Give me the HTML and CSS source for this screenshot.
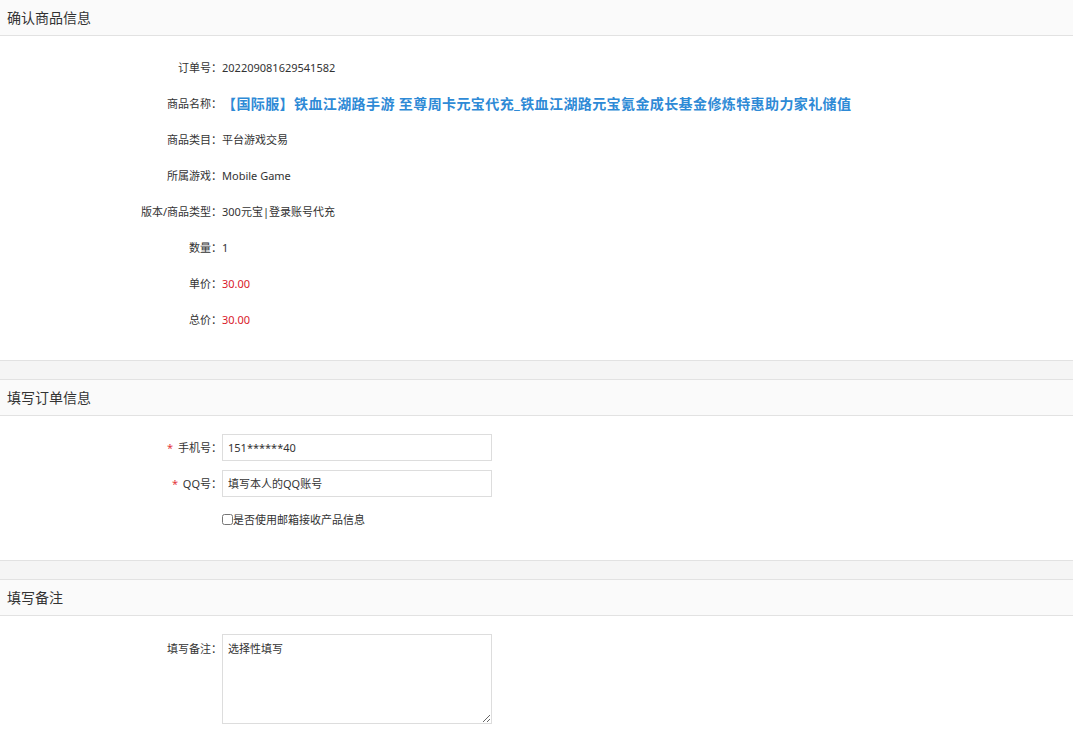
FILE: index.html
```html
<!DOCTYPE html>
<html lang="zh-CN">
<head>
<meta charset="utf-8">
<title>确认订单</title>
<link rel="stylesheet" href="styles.css">
</head>
<body>
<div class="panel">
  <div class="panel-title">确认商品信息</div>
  <div class="panel-body">
    <div class="row"><div class="label">订单号：</div><div class="value">202209081629541582</div></div>
    <div class="row"><div class="label">商品名称：</div><div class="value name">【国际服】铁血江湖路手游 至尊周卡元宝代充_铁血江湖路元宝氪金成长基金修炼特惠助力家礼储值</div></div>
    <div class="row"><div class="label">商品类目：</div><div class="value">平台游戏交易</div></div>
    <div class="row"><div class="label">所属游戏：</div><div class="value">Mobile Game</div></div>
    <div class="row"><div class="label">版本/商品类型：</div><div class="value">300元宝|登录账号代充</div></div>
    <div class="row"><div class="label">数量：</div><div class="value">1</div></div>
    <div class="row"><div class="label">单价：</div><div class="value price">30.00</div></div>
    <div class="row"><div class="label">总价：</div><div class="value price">30.00</div></div>
  </div>
</div>
<div class="band"></div>
<div class="panel">
  <div class="panel-title">填写订单信息</div>
  <div class="panel-body">
    <div class="row"><div class="label"><span class="req">*</span> 手机号：</div><div class="value"><input class="field" type="text" value="151******40"></div></div>
    <div class="row"><div class="label"><span class="req">*</span> QQ号：</div><div class="value"><input class="field" type="text" value="填写本人的QQ账号"></div></div>
    <div class="row"><div class="label"></div><div class="value"><label class="check"><input type="checkbox" class="box">是否使用邮箱接收产品信息</label></div></div>
  </div>
</div>
<div class="band"></div>
<div class="panel">
  <div class="panel-title">填写备注</div>
  <div class="panel-body memo">
    <div class="row top"><div class="label">填写备注：</div><div class="value"><textarea class="area">选择性填写</textarea></div></div>
  </div>
</div>
</body>
</html>
```
FILE: styles.css
```css
html, body {
  margin: 0;
  padding: 0;
  background: #fff;
  font-family: "Noto Sans", "Noto Sans CJK SC", sans-serif;
  color: #333;
  font-size: 11px;
}
.panel-title {
  height: 35px;
  line-height: 35px;
  padding-left: 7px;
  font-size: 14px;
  color: #333;
  background: #fafafa;
  border-bottom: 1px solid #e2e2e2;
}
.panel-body {
  padding: 13px 0 23px;
}
.row {
  display: flex;
  align-items: center;
  height: 36px;
}
.label {
  width: 222px;
  flex: none;
  text-align: right;
  color: #333;
  font-size: 11px;
}
.value {
  color: #333;
  white-space: nowrap;
  font-size: 11px;
}
.value.name {
  color: #2e8ad6;
  font-weight: bold;
  font-size: 14px;
  letter-spacing: 0.4px;
}
.value.price {
  color: #d9192b;
}
.req {
  color: #e4393c;
  margin-right: 2px;
}
.band {
  height: 18px;
  background: #f5f5f5;
  border-top: 1px solid #e2e2e2;
  border-bottom: 1px solid #e2e2e2;
}
.field {
  box-sizing: border-box;
  width: 270px;
  height: 27px;
  border: 1px solid #ddd;
  padding: 0 5px;
  font-family: inherit;
  font-size: 11px;
  color: #333;
  outline: none;
  margin: 0;
}
.check {
  display: flex;
  align-items: center;
  color: #333;
  font-size: 11px;
}
.box {
  margin: 0;
  width: 11px;
  height: 11px;
}
.memo {
  padding-top: 18px;
  padding-bottom: 20px;
}
.row.top {
  align-items: flex-start;
  height: auto;
}
.row.top .label {
  padding-top: 6px;
}
.area {
  box-sizing: border-box;
  width: 270px;
  height: 90px;
  border: 1px solid #ddd;
  padding: 5px 5px;
  font-family: inherit;
  font-size: 11px;
  color: #333;
  margin: 0;
  display: block;
  outline: none;
}
```
